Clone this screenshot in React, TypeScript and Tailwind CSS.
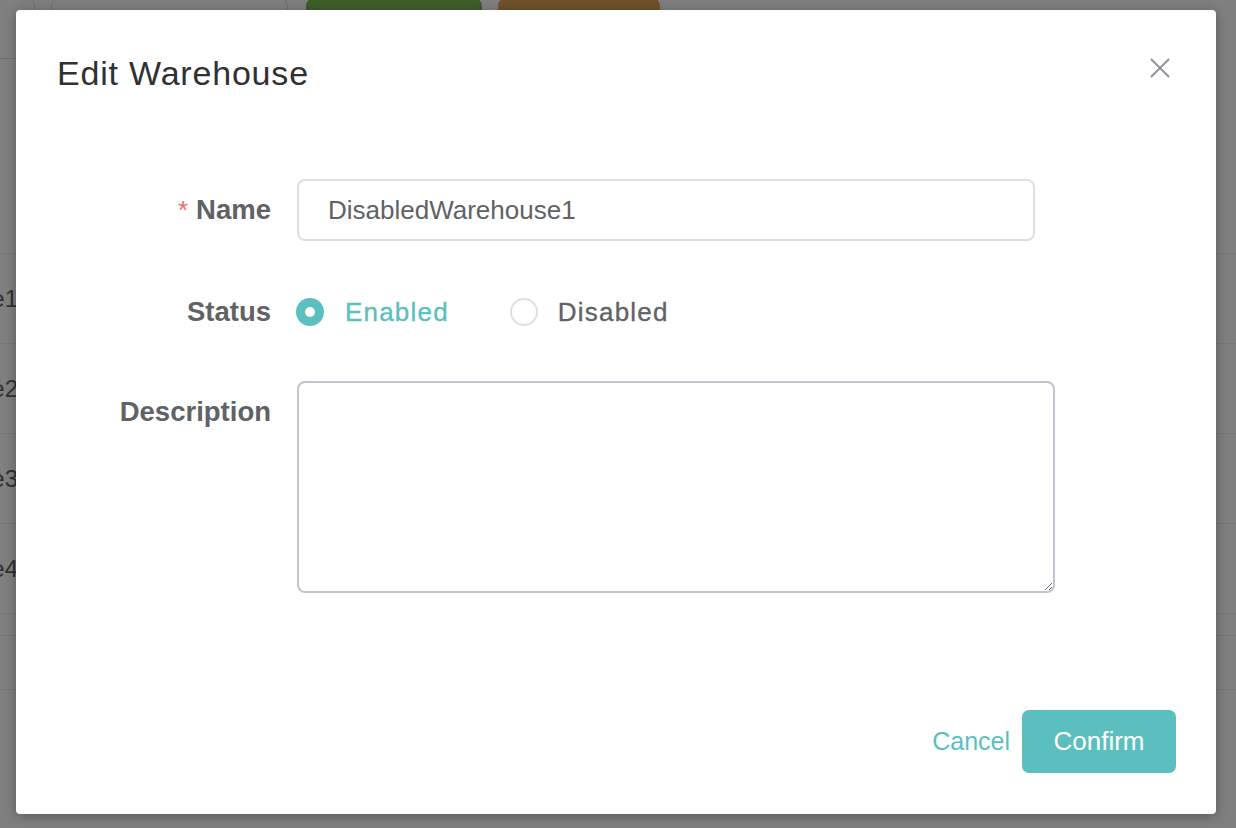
import React from "react";

const rows = ["DisabledWarehouse1", "DisabledWarehouse2", "DisabledWarehouse3", "DisabledWarehouse4"];

export default function App() {
  return (
    <div className="relative w-[1236px] h-[828px] overflow-hidden bg-white font-['Liberation_Sans',Arial,sans-serif]">
      {/* background page */}
      <div className="flex flex-col">
        <div className="flex items-start h-[59px]">
          <div className="-ml-[20px] -mt-[2px] w-[55px] h-[61px] border border-[#dcdfe6] rounded-[8px] bg-white" />
          <div className="ml-[16px] -mt-[2px] w-[237px] h-[61px] border border-[#dcdfe6] rounded-[8px] bg-white" />
          <div className="ml-[18px] -mt-[2px] w-[176px] h-[61px] rounded-[8px] bg-[#7abc54]" />
          <div className="ml-[16px] -mt-[2px] w-[162px] h-[61px] rounded-[8px] bg-[#dca252]" />
        </div>
        <div className="h-[195px] border-b border-[#ebeef5]" />
        {rows.map((r) => (
          <div key={r} className="h-[90px] border-b border-[#ebeef5] flex items-center">
            <div className="w-[18px] flex justify-end whitespace-nowrap text-[24px] text-[#606266]">{r}</div>
          </div>
        ))}
        <div className="h-[22px] border-b border-[#ebeef5]" />
        <div className="h-[54px] border-b border-[#ebeef5]" />
      </div>

      {/* overlay */}
      <div className="absolute inset-0 bg-black/50" />

      {/* dialog */}
      <div className="absolute inset-0 pl-[16px] pt-[10px]">
        <div className="relative w-[1200px] h-[804px] bg-white rounded-[4px] shadow-[0_2px_12px_rgba(0,0,0,0.3)] flex flex-col">
          <div className="pt-[43px] pl-[41px]">
            <div className="h-[40px] leading-[40px] text-[34px] tracking-[0.8px] text-[#303133]">Edit Warehouse</div>
          </div>
          <button className="absolute top-[48px] right-[46px] w-[20px] h-[20px] text-[#909399]">
            <svg width="20" height="20" viewBox="0 0 20 20" fill="none" stroke="currentColor" strokeWidth="2">
              <line x1="1" y1="1" x2="19" y2="19" />
              <line x1="19" y1="1" x2="1" y2="19" />
            </svg>
          </button>

          <div className="pt-[86px] flex flex-col">
            <div className="flex items-center h-[62px] mb-[40px]">
              <div className="w-[255px] text-right text-[27.5px] font-bold text-[#606266]">
                <span className="text-[#f56c6c] font-normal text-[26px] mr-[8px]">*</span>Name
              </div>
              <input
                readOnly
                value="DisabledWarehouse1"
                className="ml-[26px] w-[738px] h-[62px] border-2 border-[#dcdfe6] rounded-[8px] px-[29px] text-[26px] text-[#606266] outline-none"
              />
            </div>

            <div className="flex items-center h-[62px] mb-[38px]">
              <div className="w-[255px] text-right text-[27.5px] font-bold text-[#606266]">Status</div>
              <div className="ml-[25px] flex items-center">
                <span className="w-[28px] h-[28px] rounded-full bg-[#5bbfc0] flex items-center justify-center">
                  <span className="w-[10px] h-[10px] rounded-full bg-white" />
                </span>
                <span className="ml-[21px] text-[26px] tracking-[1.2px] [-webkit-text-stroke:0.35px_#5bbfc0] text-[#5bbfc0]">Enabled</span>
                <span className="ml-[61px] w-[28px] h-[28px] rounded-full border-2 border-[#dcdfe6] bg-white" />
                <span className="ml-[20px] text-[26px] tracking-[1.2px] [-webkit-text-stroke:0.35px_#606266] text-[#606266]">Disabled</span>
              </div>
            </div>

            <div className="flex items-start">
              <div className="w-[255px] h-[62px] leading-[62px] text-right text-[27.5px] font-bold text-[#606266]">Description</div>
              <textarea className="ml-[26px] w-[758px] h-[212px] border-2 border-[#c0c4cc] rounded-[8px] px-[29px] py-[10px] text-[26px] text-[#606266] outline-none" />
            </div>
          </div>

          <div className="mt-auto flex justify-end items-center pr-[40px] pb-[41px]">
            <button className="mr-[12px] text-[25px] text-[#5bbfc0]">Cancel</button>
            <button className="w-[154px] h-[63px] rounded-[7px] bg-[#5bbfc0] text-white text-[26px]">Confirm</button>
          </div>
        </div>
      </div>
    </div>
  );
}
